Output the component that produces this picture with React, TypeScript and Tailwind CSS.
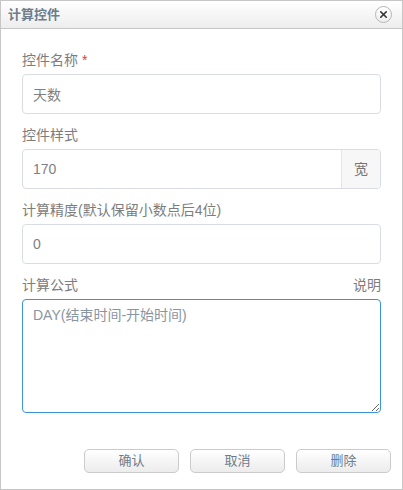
import { X } from "lucide-react";

const font = { fontFamily: '"Liberation Sans", "Noto Sans CJK SC", sans-serif' };

function Field({ label, children, right }: { label: React.ReactNode; children: React.ReactNode; right?: string }) {
  return (
    <div className="mb-[11px]">
      <div className="flex justify-between h-5 leading-5 mb-1 text-[14px] text-[#7d7d7d]">
        <span>{label}</span>
        {right && <span>{right}</span>}
      </div>
      {children}
    </div>
  );
}

export default function App() {
  return (
    <div
      style={font}
      className="w-[403px] h-[490px] border border-[#c6c6c6] bg-white flex flex-col"
    >
      {/* Title bar */}
      <div className="h-[28px] flex items-center justify-between pl-[7px] pr-[10px] border-b border-[#c6c6c6] bg-gradient-to-b from-white to-[#ededed]">
        <span className="text-[13px] font-bold text-[#6d7c8c]">计算控件</span>
        <button className="w-[17px] h-[17px] rounded-full border border-[#b5b5b5] bg-gradient-to-b from-white to-[#eeeeee] flex items-center justify-center">
          <X size={11} strokeWidth={3.5} className="text-[#333]" />
        </button>
      </div>

      {/* Body */}
      <div className="px-[21px] pt-[21px] flex-1">
        <Field label={<>控件名称 <span className="text-[#e4393c]">*</span></>}>
          <input
            defaultValue="天数"
            className="w-full h-10 px-[10px] border border-[#d9dde3] rounded-[4px] text-[14px] text-[#808080] outline-none"
          />
        </Field>

        <Field label="控件样式">
          <div className="flex h-10 border border-[#d9dde3] rounded-[4px] overflow-hidden">
            <input
              defaultValue="170"
              className="flex-1 min-w-0 px-[10px] text-[14px] text-[#808080] outline-none"
            />
            <span className="w-[39px] flex items-center justify-center border-l border-[#e2e5ea] bg-[#f7f7f7] text-[14px] text-[#777]">
              宽
            </span>
          </div>
        </Field>

        <Field label="计算精度(默认保留小数点后4位)">
          <input
            defaultValue="0"
            className="w-full h-10 px-[10px] border border-[#d9dde3] rounded-[4px] text-[14px] text-[#808080] outline-none"
          />
        </Field>

        <Field label="计算公式" right="说明">
          <textarea
            defaultValue="DAY(结束时间-开始时间)"
            className="block w-full h-[114px] px-[10px] py-[5px] border border-[#3b94d9] rounded-[4px] text-[14px] leading-5 text-[#8a95a2] outline-none"
          />
        </Field>
      </div>

      {/* Footer buttons */}
      <div className="flex justify-end gap-[11px] pr-[11px] pb-[16px]">
        {["确认", "取消", "删除"].map((t) => (
          <button
            key={t}
            className="w-[95px] h-[24px] rounded-[5px] border border-[#cbcbcb] bg-gradient-to-b from-white to-[#ececec] text-[13px] text-[#6d7c8c]"
          >
            {t}
          </button>
        ))}
      </div>
    </div>
  );
}
